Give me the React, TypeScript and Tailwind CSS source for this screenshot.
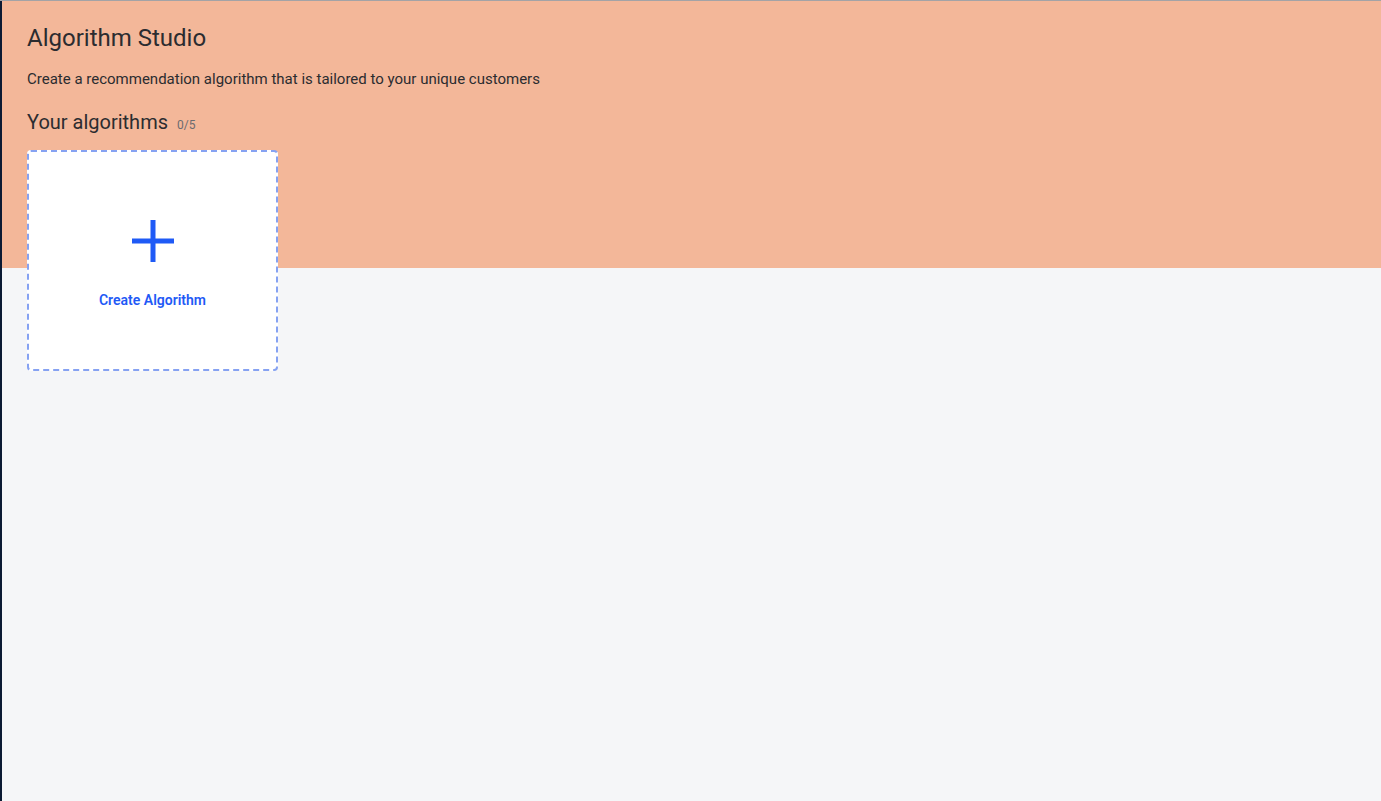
function PlusIcon() {
  return (
    <svg width="44" height="44" viewBox="0 0 44 44" className="text-[#1f5af6]">
      <rect x="1" y="19.5" width="42" height="5" fill="currentColor" />
      <rect x="19.5" y="1" width="5" height="42" fill="currentColor" />
    </svg>
  );
}

export default function App() {
  return (
    <div className="flex min-h-screen w-full border-t border-[#a3a3a6] bg-[#0b1a33] font-['Roboto','Liberation_Sans',sans-serif]">
      <main className="ml-[2px] flex-1 min-h-[800px] bg-[linear-gradient(to_bottom,#f3b799_267px,#f5f6f8_267px)] px-[25px] pt-[21px] text-[#2b2c30]">
        <h1 className="text-[24px] leading-[32px] font-normal">Algorithm Studio</h1>
        <p className="mt-[14px] text-[15px] leading-[22px]">
          Create a recommendation algorithm that is tailored to your unique customers
        </p>
        <div className="mt-[18px] flex items-baseline gap-[9px]">
          <h2 className="text-[20px] leading-[28px] font-normal">Your algorithms</h2>
          <span className="text-[12px] text-[#6b6b70]">0/5</span>
        </div>
        <button className="mt-[14px] flex h-[221px] w-[251px] flex-col items-center rounded-[4px] border-2 border-dashed border-[#86a2f2] bg-white">
          <div className="mt-[67px]">
            <PlusIcon />
          </div>
          <span className="mt-[27px] text-[14px] leading-[20px] font-semibold text-[#1f5af6]">Create Algorithm</span>
        </button>
      </main>
    </div>
  );
}
